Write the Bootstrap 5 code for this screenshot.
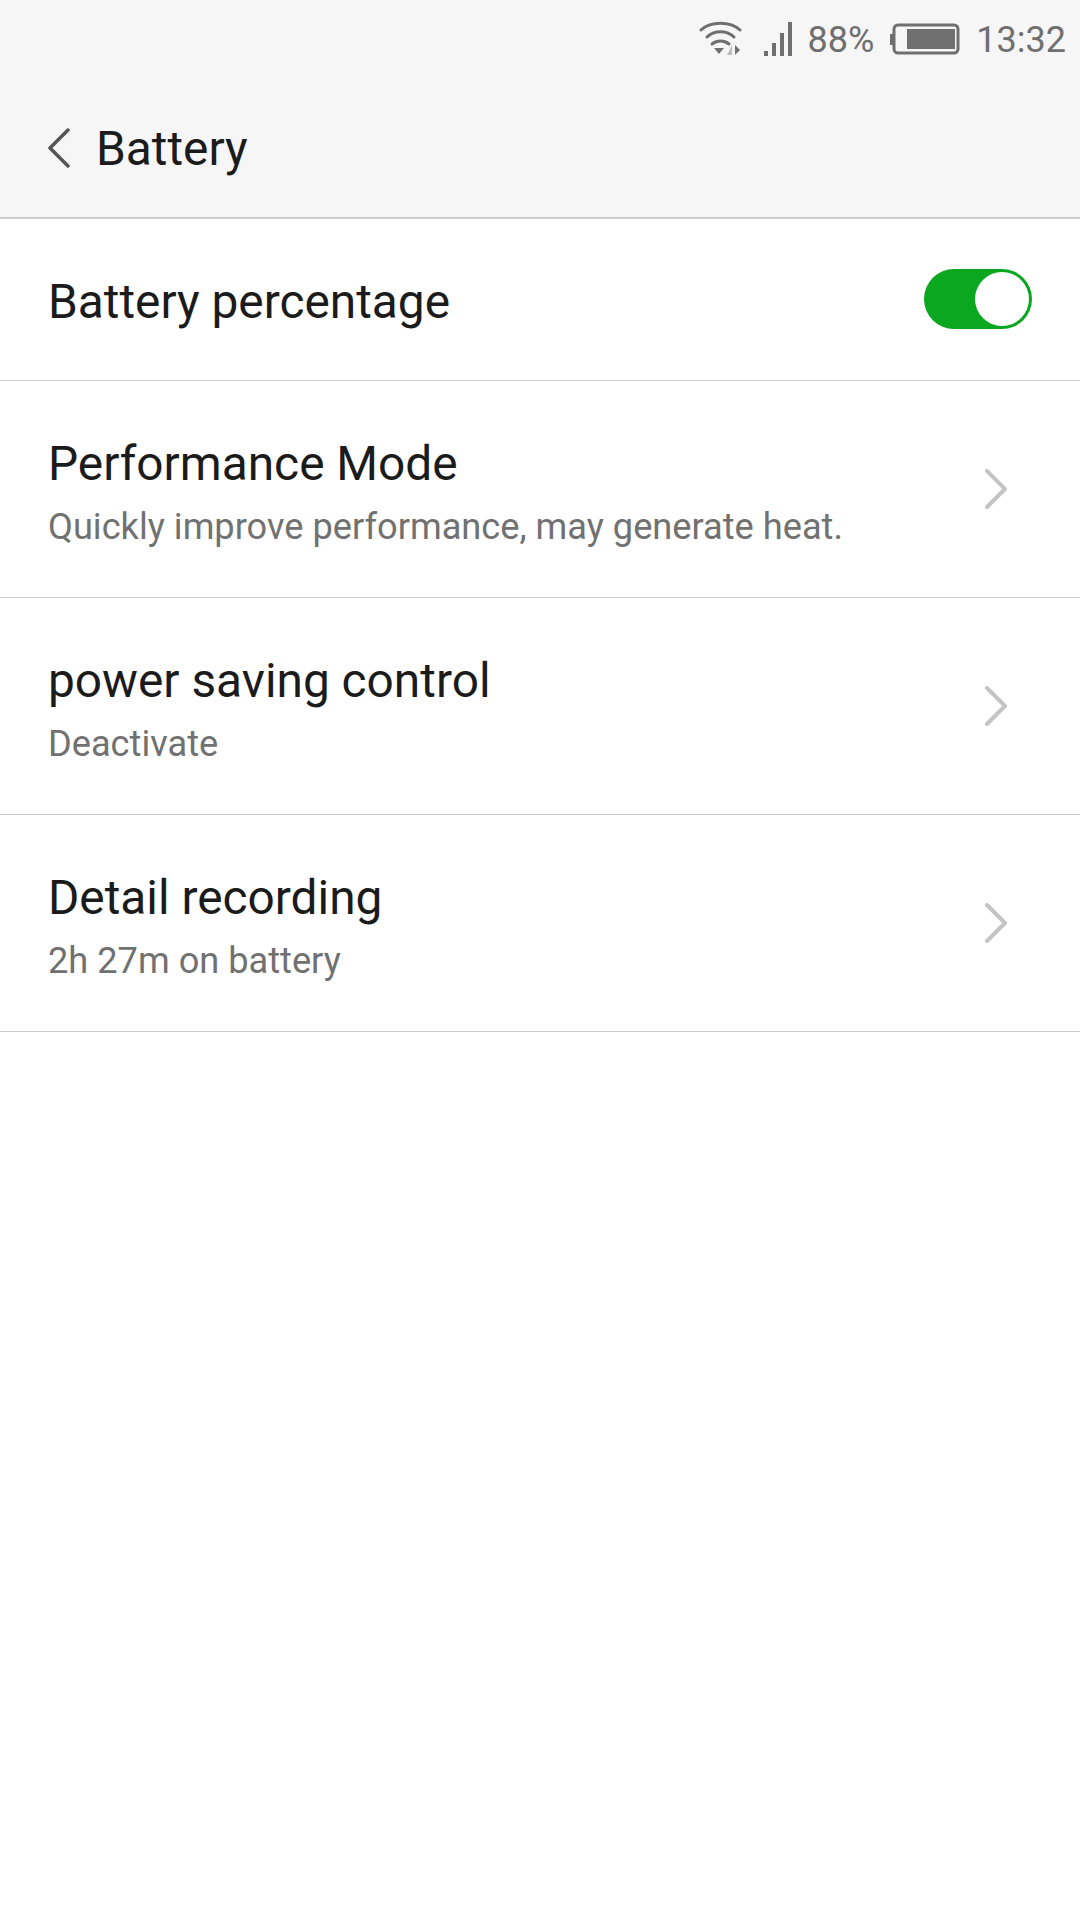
<!DOCTYPE html>
<html lang="en">
<head>
  <meta charset="UTF-8" />
  <meta name="viewport" content="width=device-width, initial-scale=1.0"/>
  <title>Battery</title>
  <link href="https://cdn.jsdelivr.net/npm/bootstrap@5.3.0/dist/css/bootstrap.min.css" rel="stylesheet"/>
  <style>
    body {
      font-family: Roboto, "Noto Sans", sans-serif;
      background: #fff;
      color: #1b1b1b;
    }
    .top-area {
      height: 219px;
      background: #f6f6f6;
      border-bottom: 2px solid #cdcdcd;
    }
    .status-bar {
      height: 78px;
      padding-right: 14px;
      color: #6f6f6f;
      font-size: 36px;
      line-height: 1;
    }
    .status-text { padding-top: 2px; }
    .signal-icon { margin-left: 21px; }
    .title-bar {
      height: 139px;
      padding-left: 48px;
    }
    .title-text {
      font-size: 47.8px;
      margin-left: 26px;
      padding-top: 4px;
    }
    .set-row {
      border-bottom: 1px solid #cfcfcf;
      padding: 0 48px;
    }
    .set-row-switch { height: 162px; }
    .set-row-link { height: 217px; }
    .row-text { padding-top: 6px; }
    .row-title {
      font-size: 47.8px;
      line-height: 55px;
      padding-top: 1px;
    }
    .switch-label { padding-top: 6px; }
    .row-sub {
      font-size: 36.2px;
      line-height: 42px;
      color: #717171;
      margin-top: 14px;
    }
    .row-arrow { margin-right: 25px; }
    .toggle-on {
      width: 108px;
      height: 60px;
      margin-bottom: 2px;
      border-radius: 30px;
      background: #0ba720;
      position: relative;
    }
    .toggle-knob {
      position: absolute;
      top: 3px;
      right: 3px;
      width: 54px;
      height: 54px;
      border-radius: 50%;
      background: #fff;
    }
  </style>
</head>
<body>
  <div class="top-area">
    <div class="status-bar d-flex justify-content-end align-items-center">
      <svg width="44" height="36" viewBox="0 0 44 36" fill="none" stroke="#6f6f6f" stroke-width="3" stroke-linecap="round">
        <path d="M2 9C12 0 31 0 41 9"/>
        <path d="M8 16C15 9 28 9 35 16"/>
        <path d="M13 23C18 19 25 19 30 23"/>
        <path d="M15 27h10l-5 6z" fill="#6f6f6f" stroke="none"/>
        <path d="M33 24v10h-5z" fill="#bdbdbd" stroke="none"/>
        <path d="M36 24v10l5-5z" fill="#6f6f6f" stroke="none"/>
      </svg>
      <svg class="signal-icon" width="28" height="34" viewBox="0 0 28 34" fill="#6f6f6f">
        <rect x="0" y="29" width="4" height="5"/>
        <rect x="8" y="21" width="4" height="13"/>
        <rect x="16" y="11" width="4" height="23"/>
        <rect x="24" y="0" width="4" height="34"/>
      </svg>
      <span class="ms-3 status-text">88%</span>
      <svg class="ms-3" width="70" height="32" viewBox="0 0 70 32" fill="none">
        <rect x="0" y="11" width="4" height="11" fill="#6f6f6f"/>
        <rect x="4" y="2" width="64" height="28" rx="4" stroke="#6f6f6f" stroke-width="3"/>
        <rect x="17" y="6" width="48" height="20" fill="#6f6f6f"/>
      </svg>
      <span class="ms-3 status-text">13:32</span>
    </div>
    <div class="title-bar d-flex align-items-center">
      <svg width="22" height="40" viewBox="0 0 22 40" fill="none" stroke="#555" stroke-width="3.5" stroke-linecap="round" stroke-linejoin="round">
        <path d="M20 2L2 20L20 38"/>
      </svg>
      <span class="title-text">Battery</span>
    </div>
  </div>

  <div class="set-row set-row-switch d-flex justify-content-between align-items-center">
    <div class="row-title switch-label">Battery percentage</div>
    <div class="toggle-on"><div class="toggle-knob"></div></div>
  </div>

  <div class="set-row set-row-link d-flex justify-content-between align-items-center">
    <div class="row-text">
      <div class="row-title">Performance Mode</div>
      <div class="row-sub">Quickly improve performance, may generate heat.</div>
    </div>
    <svg class="row-arrow" width="22" height="40" viewBox="0 0 22 40" fill="none" stroke="#c4c4c4" stroke-width="4" stroke-linecap="round" stroke-linejoin="round">
      <path d="M2 2L20 20L2 38"/>
    </svg>
  </div>

  <div class="set-row set-row-link d-flex justify-content-between align-items-center">
    <div class="row-text">
      <div class="row-title">power saving control</div>
      <div class="row-sub">Deactivate</div>
    </div>
    <svg class="row-arrow" width="22" height="40" viewBox="0 0 22 40" fill="none" stroke="#c4c4c4" stroke-width="4" stroke-linecap="round" stroke-linejoin="round">
      <path d="M2 2L20 20L2 38"/>
    </svg>
  </div>

  <div class="set-row set-row-link d-flex justify-content-between align-items-center">
    <div class="row-text">
      <div class="row-title">Detail recording</div>
      <div class="row-sub">2h 27m on battery</div>
    </div>
    <svg class="row-arrow" width="22" height="40" viewBox="0 0 22 40" fill="none" stroke="#c4c4c4" stroke-width="4" stroke-linecap="round" stroke-linejoin="round">
      <path d="M2 2L20 20L2 38"/>
    </svg>
  </div>

  <script src="https://cdn.jsdelivr.net/npm/bootstrap@5.3.0/dist/js/bootstrap.bundle.min.js"></script>
</body>
</html>
